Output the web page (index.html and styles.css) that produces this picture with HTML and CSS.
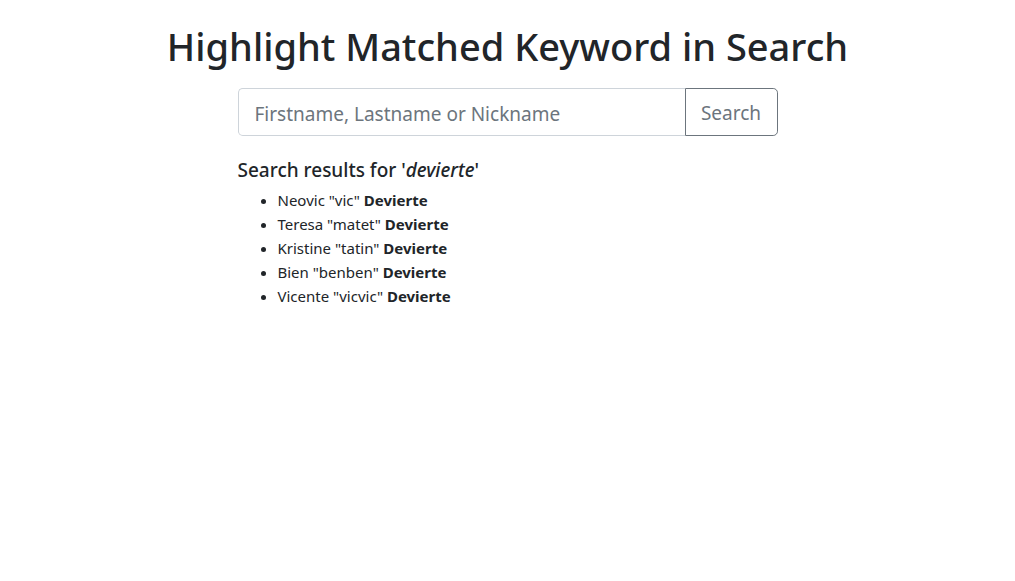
FILE: index.html
```html
<!DOCTYPE html>
<html lang="en">
<head>
    <meta charset="UTF-8">
    <meta name="viewport" content="width=device-width, initial-scale=1.0">
    <title>Highlight Matched Keyword in Search</title>
    <link rel="stylesheet" href="styles.css">
</head>
<body>

<div class="container">
    <h1 class="title">Highlight Matched Keyword in Search</h1>

    <form class="search-form">
        <input type="text" class="search-input" placeholder="Firstname, Lastname or Nickname">
        <button type="button" class="search-btn">Search</button>
    </form>

    <div class="results">
        <h5 class="results-title">Search results for '<em>devierte</em>'</h5>
        <ul class="results-list">
            <li>Neovic "vic" <b>Devierte</b></li>
            <li>Teresa "matet" <b>Devierte</b></li>
            <li>Kristine "tatin" <b>Devierte</b></li>
            <li>Bien "benben" <b>Devierte</b></li>
            <li>Vicente "vicvic" <b>Devierte</b></li>
        </ul>
    </div>
</div>

</body>
</html>
```

FILE: styles.css
```css
body {
    font-family: "Noto Sans", "Open Sans", sans-serif;
    margin: 0;
    padding: 0;
    color: #212529;
    background-color: #fff;
    font-size: 15px;
    line-height: 1.5;
}
.container {
    width: 540px;
    margin: 0 auto;
}
.title {
    font-size: 38px;
    font-weight: 500;
    line-height: 1.2;
    text-align: center;
    margin: 24px -200px 18px;
}
.search-form {
    display: flex;
    margin: 0;
}
.search-input {
    flex: 1;
    height: 48px;
    box-sizing: border-box;
    padding: 11px 16px 7px;
    font-family: inherit;
    font-size: 19px;
    color: #495057;
    border: 1px solid #ced4da;
    border-right: none;
    border-radius: 4.8px 0 0 4.8px;
    outline: none;
}
.search-input::placeholder {
    color: #6c757d;
}
.search-btn {
    height: 48px;
    width: 93px;
    font-family: inherit;
    font-size: 19px;
    color: #6c757d;
    background: #fff;
    border: 1px solid #6c757d;
    border-radius: 0 4.8px 4.8px 0;
    padding: 3px 0 0;
}
.results {
    margin-top: 23px;
}
.results-title {
    font-size: 19px;
    font-weight: 500;
    line-height: 1.2;
    margin: 0 0 7px;
}
.results-list {
    margin: 0;
    padding-left: 40px;
    line-height: 24px;
}
```
